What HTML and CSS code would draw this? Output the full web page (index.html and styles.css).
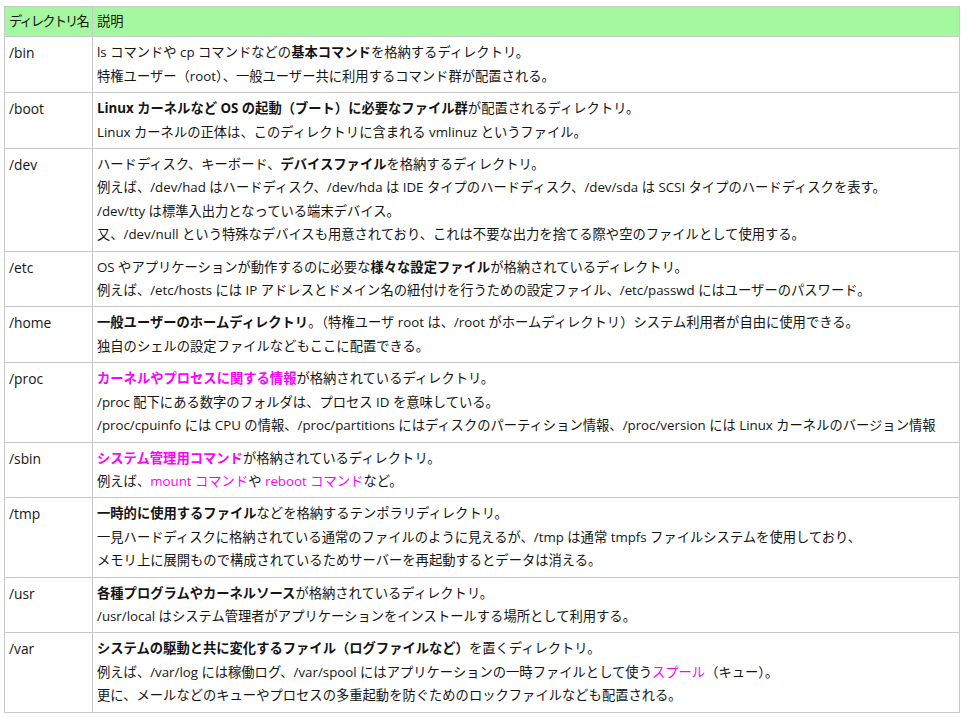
FILE: index.html
```html
<!DOCTYPE html>
<html lang="ja">
<head>
<meta charset="utf-8">
<link rel="stylesheet" href="styles.css">
</head>
<body>
<table class="dirs">
  <thead>
    <tr><th class="name">ディレクトリ名</th><th>説明</th></tr>
  </thead>
  <tbody>
    <tr><td class="name">/bin</td><td>ls コマンドや cp コマンドなどの<b>基本コマンド</b>を格納するディレクトリ。<br>特権ユーザー（root）、一般ユーザー共に利用するコマンド群が配置される。</td></tr>
    <tr><td class="name">/boot</td><td><b>Linux カーネルなど OS の起動（ブート）に必要なファイル群</b>が配置されるディレクトリ。<br>Linux カーネルの正体は、このディレクトリに含まれる vmlinuz というファイル。</td></tr>
    <tr><td class="name">/dev</td><td>ハードディスク、キーボード、<b>デバイスファイル</b>を格納するディレクトリ。<br>例えば、/dev/had はハードディスク、/dev/hda は IDE タイプのハードディスク、/dev/sda は SCSI タイプのハードディスクを表す。<br>/dev/tty は標準入出力となっている端末デバイス。<br>又、/dev/null という特殊なデバイスも用意されており、これは不要な出力を捨てる際や空のファイルとして使用する。</td></tr>
    <tr><td class="name">/etc</td><td>OS やアプリケーションが動作するのに必要な<b>様々な設定ファイル</b>が格納されているディレクトリ。<br>例えば、/etc/hosts には IP アドレスとドメイン名の紐付けを行うための設定ファイル、/etc/passwd にはユーザーのパスワード。</td></tr>
    <tr><td class="name">/home</td><td><b>一般ユーザーのホームディレクトリ</b>。（特権ユーザ root は、/root がホームディレクトリ）システム利用者が自由に使用できる。<br>独自のシェルの設定ファイルなどもここに配置できる。</td></tr>
    <tr><td class="name">/proc</td><td><b class="hl">カーネルやプロセスに関する情報</b>が格納されているディレクトリ。<br>/proc 配下にある数字のフォルダは、プロセス ID を意味している。<br>/proc/cpuinfo には CPU の情報、/proc/partitions にはディスクのパーティション情報、/proc/version には Linux カーネルのバージョン情報</td></tr>
    <tr><td class="name">/sbin</td><td><b class="hl">システム管理用コマンド</b>が格納されているディレクトリ。<br>例えば、<span class="hl">mount コマンド</span>や <span class="hl">reboot コマンド</span>など。</td></tr>
    <tr><td class="name">/tmp</td><td><b>一時的に使用するファイル</b>などを格納するテンポラリディレクトリ。<br>一見ハードディスクに格納されている通常のファイルのように見えるが、/tmp は通常 tmpfs ファイルシステムを使用しており、<br>メモリ上に展開もので構成されているためサーバーを再起動するとデータは消える。</td></tr>
    <tr><td class="name">/usr</td><td><b>各種プログラムやカーネルソース</b>が格納されているディレクトリ。<br>/usr/local はシステム管理者がアプリケーションをインストールする場所として利用する。</td></tr>
    <tr><td class="name">/var</td><td><b>システムの駆動と共に変化するファイル（ログファイルなど）</b>を置くディレクトリ。<br>例えば、/var/log には稼働ログ、/var/spool にはアプリケーションの一時ファイルとして使う<span class="hl">スプール</span>（キュー）。<br>更に、メールなどのキューやプロセスの多重起動を防ぐためのロックファイルなども配置される。</td></tr>
  </tbody>
</table>
</body>
</html>
```
FILE: styles.css
```css
html, body {
  margin: 0;
  padding: 0;
  background: #ffffff;
}
body {
  font-family: "Open Sans", "Noto Sans CJK JP", sans-serif;
  font-size: 13.3px;
  color: #151515;
}
.dirs {
  margin: 6px 0 0 4px;
  width: 956px;
  border-collapse: collapse;
  line-height: 23.4px;
}
.dirs th,
.dirs td {
  border: 1px solid #c8c8c8;
  padding: 4px 4px;
  text-align: left;
  vertical-align: top;
  font-weight: normal;
}
.dirs th {
  background: #a4f89f;
  padding: 3px 4px;
  white-space: nowrap;
}
.dirs th.name {
  letter-spacing: -1.9px;
}
.dirs .name {
  width: 79px;
  white-space: nowrap;
  font-size: 13.8px;
}
.dirs th.name {
  font-size: 13.3px;
}
.dirs b {
  font-weight: bold;
}
.hl {
  color: #ff00ff;
}
```
